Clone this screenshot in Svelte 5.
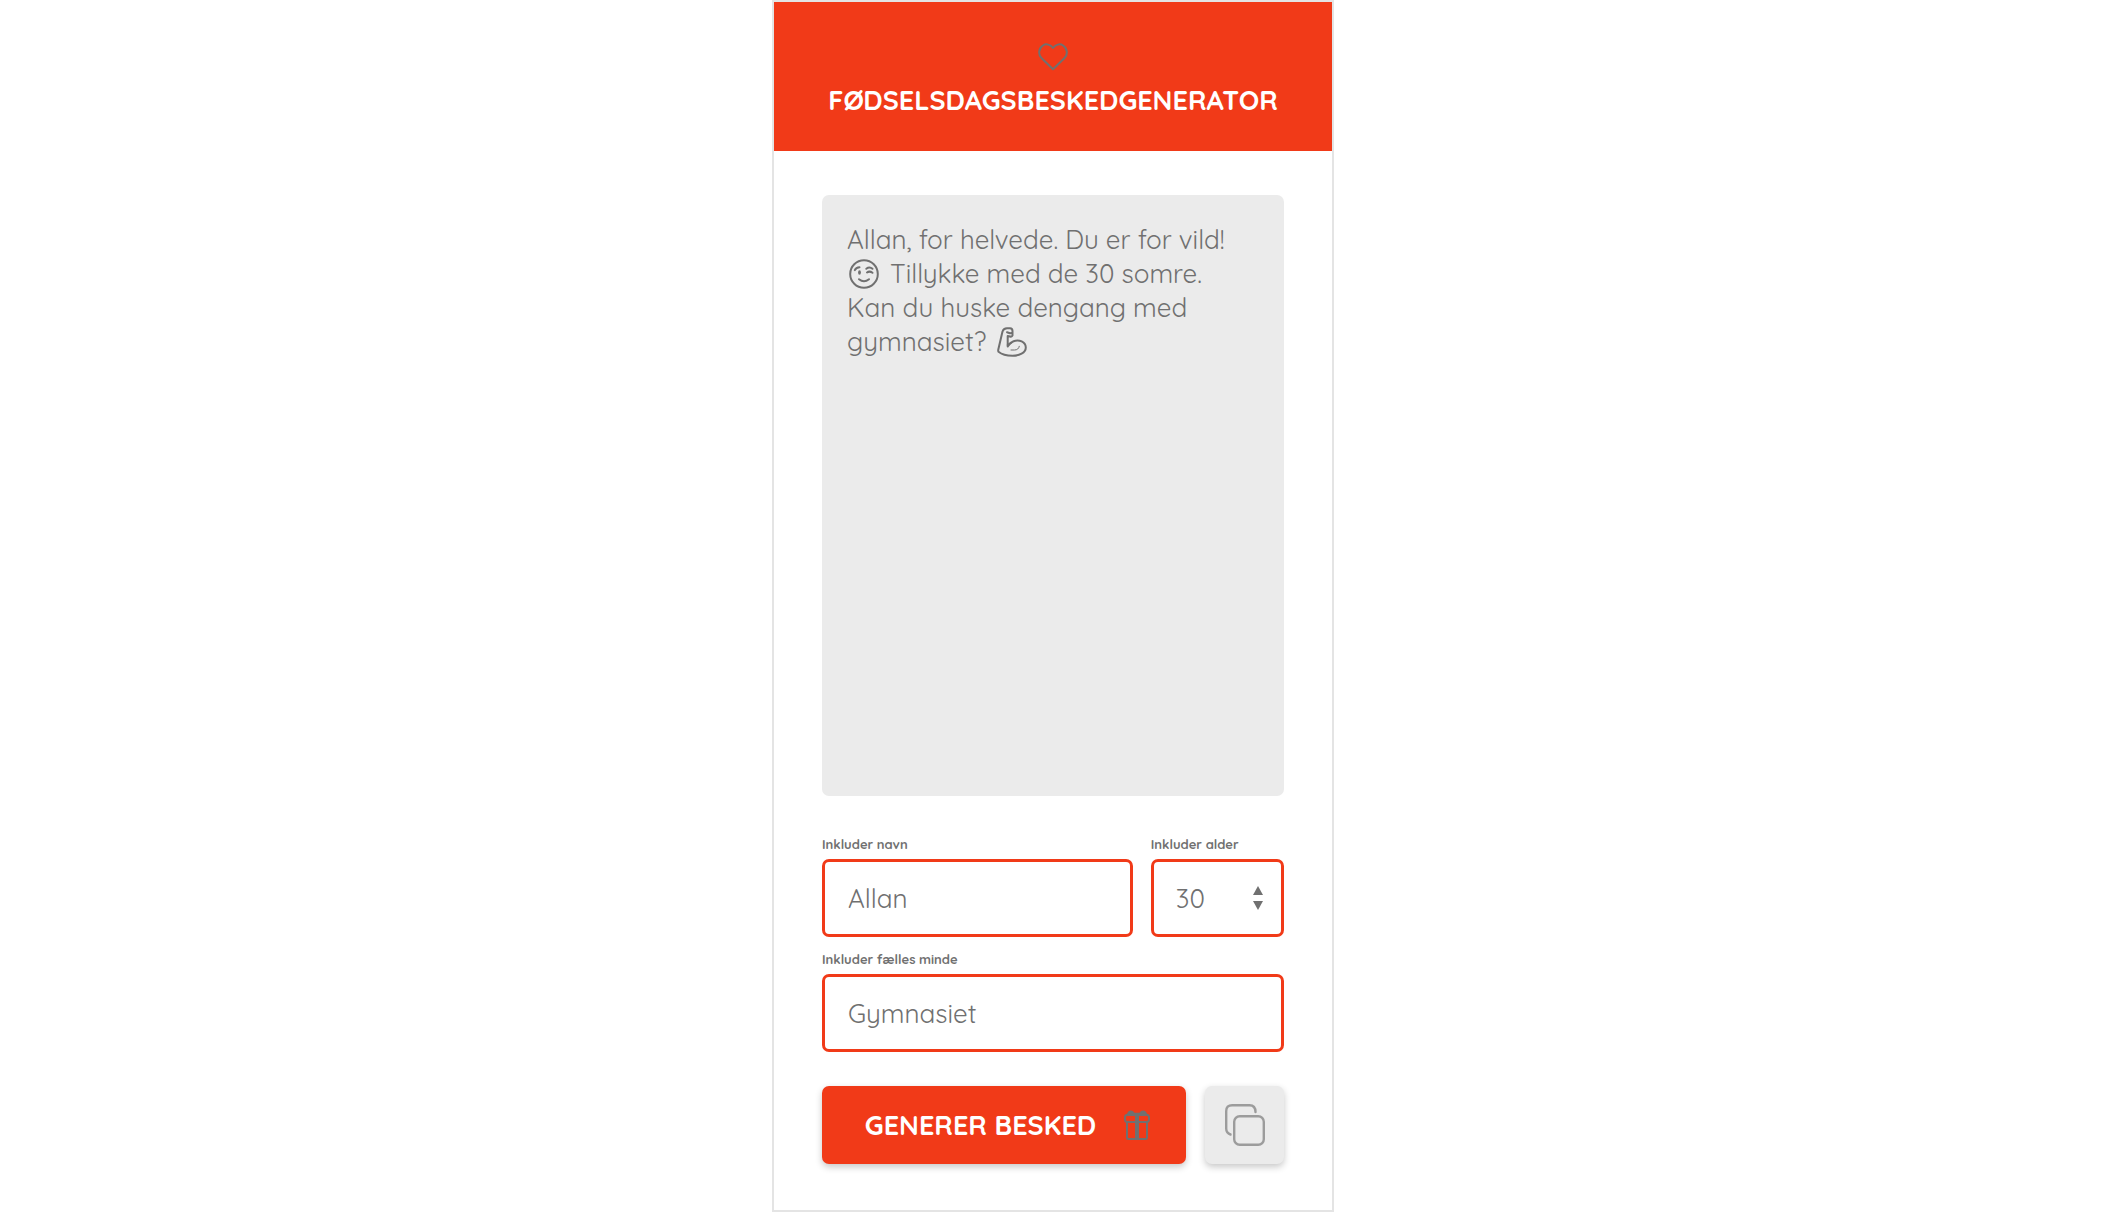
<script>
  let name = $state('Allan');
  let age = $state(30);
  let memory = $state('Gymnasiet');
</script>

<main class="card">
  <header class="banner">
    <svg class="heart" viewBox="0 0 30 28" aria-hidden="true">
      <path d="M15 5C12.4 1.6 8.2.2 4.9 2.5C.6 5.400 0 11 3.200 14.700L15 26.300L26.800 14.700C30 11 29.400 5.400 25.100 2.500C21.800.2 17.600 1.600 15 5Z" />
    </svg>
    <h1>FØDSELSDAGSBESKEDGENERATOR</h1>
  </header>

  <form class="body" onsubmit={(e) => e.preventDefault()}>
    <output class="message" for="name age memory">
      <span class="line">Allan, for helvede. Du er for vild!</span>
      <span class="line">
        <svg class="emoji" viewBox="0 0 30 30" role="img" aria-label="Blinkende smiley">
          <circle cx="15" cy="15" r="13.800" />
          <path d="M5.800 11.200Q7 8.300 10.500 8.200M17.300 9.800Q20.500 7.300 23.500 9.800M18 13.500Q20.500 11.600 23.500 13.800M10 20.200Q15 24.200 20 20.200" />
          <ellipse class="solid" cx="10.500" cy="13.500" rx="1.400" ry="2.200" />
        </svg>
        Tillykke med de 30 somre.
      </span>
      <span class="line">Kan du huske dengang med</span>
      <span class="line">
        gymnasiet?
        <svg class="emoji" viewBox="0 0 30 30" role="img" aria-label="Spændt biceps">
          <path d="M5.500 4.500Q6.500 1.500 10 1.300H13Q15.500 1.500 15.500 4V8.500Q15 10 13 9.500L10.700 9V19.500Q13 15.500 16.500 14.200C22 12 28.700 14.800 28.800 20.500C28.800 26 22 28.800 15.500 28.800C10 28.800 4.500 27.300 1.500 24.800Q1 24 1.300 22.500Z" />
          <path d="M10.700 18L14 15.800M10 5.200L13 6.300L15 6" />
          <path class="thin" d="M14 23H17.500Q21.500 23 22.300 19.300" />
        </svg>
      </span>
    </output>

    <div class="fields">
      <div class="field">
        <label for="name">Inkluder navn</label>
        <input id="name" type="text" bind:value={name} />
      </div>
      <div class="field">
        <label for="age">Inkluder alder</label>
        <div class="stepper">
          <input id="age" type="number" min="0" bind:value={age} />
          <div class="arrows">
            <button type="button" aria-label="Et år ældre" onclick={() => (age += 1)}>
              <svg viewBox="0 0 10 9" aria-hidden="true"><path d="M5 0L10 9H0Z" /></svg>
            </button>
            <button type="button" aria-label="Et år yngre" onclick={() => (age -= 1)}>
              <svg viewBox="0 0 10 9" aria-hidden="true"><path d="M0 0H10L5 9Z" /></svg>
            </button>
          </div>
        </div>
      </div>
      <div class="field wide">
        <label for="memory">Inkluder fælles minde</label>
        <input id="memory" type="text" bind:value={memory} />
      </div>
    </div>

    <div class="actions">
      <button class="generate" type="submit">
        <span>GENERER BESKED</span>
        <svg class="gift" viewBox="0 0 26 30" aria-hidden="true">
          <path class="solid" d="M3 5Q3 1 6.500.500Q9 .300 10.500 2.800H15.500Q17 .300 19.500.500Q23 1 23 5L22 6H4Z" />
          <rect x="1" y="4.800" width="24" height="7.200" rx="2.500" />
          <path d="M3 12V27.500Q3 29 4.500 29H21.500Q23 29 23 27.500V12" />
          <path class="ribbon" d="M13 4V29" />
        </svg>
      </button>
      <button class="copy" type="button" aria-label="Kopiér besked">
        <svg viewBox="0 0 40 42" aria-hidden="true">
          <path d="M5.500 30.500Q1.200 29 1.200 24.500V7.200Q1.200 1.200 7.200 1.200H24.500Q30.500 1.200 30.500 8" />
          <rect x="9.200" y="12.200" width="29.600" height="28.600" rx="5.500" />
        </svg>
      </button>
    </div>
  </form>
</main>

<style>
  :global(body) {
    background: #fff;
  }

  .card {
    --red: #f13a18;
    --grey: #707070;
    --panel: #ebebeb;
    box-sizing: border-box;
    display: flex;
    flex-direction: column;
    width: 100%;
    max-width: 562px;
    min-height: 100vh;
    margin: 0 auto;
    border: 2px solid #e4e4e4;
    color: var(--grey);
    font-family: Quicksand, Lato, sans-serif;
    font-size: 26px;
    font-weight: 400;
  }

  .banner {
    display: flex;
    flex-direction: column;
    align-items: center;
    gap: 13px;
    padding: 41px 16px 34px;
    background: var(--red);
  }

  svg {
    display: block;
    fill: none;
    stroke: currentColor;
    stroke-width: 2;
    stroke-linecap: round;
    stroke-linejoin: round;
  }

  .heart {
    width: 30px;
    height: 28px;
  }

  h1 {
    margin: 0;
    color: #fff;
    font-size: 27px;
    font-weight: 700;
    line-height: 33px;
  }

  .body {
    flex: 1;
    display: flex;
    flex-direction: column;
    padding: 44px 48px 46px;
  }

  .message {
    flex: 1;
    padding: 28px 25px;
    border-radius: 7px;
    background: var(--panel);
  }

  .line {
    display: flex;
    align-items: center;
    gap: 9px;
    line-height: 34px;
  }

  .emoji {
    width: 30px;
    height: 30px;
    margin: 0 2px;
  }

  .solid {
    fill: currentColor;
    stroke: none;
  }

  .thin {
    stroke-width: 1;
  }

  .fields {
    display: grid;
    grid-template-columns: 7fr 3fr;
    gap: 14px 18px;
    margin-top: 40px;
  }

  .field {
    display: flex;
    flex-direction: column;
    gap: 7px;
    min-width: 0;
  }

  .wide {
    grid-column: 1 / -1;
  }

  label {
    font-size: 13px;
    font-weight: 700;
    line-height: 16px;
  }

  input {
    box-sizing: border-box;
    width: 100%;
    height: 78px;
    padding: 0 23px;
    border: 3px solid var(--red);
    border-radius: 7px;
    background: #fff;
    color: inherit;
    font: inherit;
  }

  input[type='number'] {
    appearance: textfield;
    padding: 0 22px;
  }

  .stepper {
    display: grid;
    align-items: center;
  }

  .stepper > * {
    grid-area: 1 / 1;
  }

  .arrows {
    display: grid;
    gap: 6px;
    justify-self: end;
    margin-right: 21px;
  }

  button {
    padding: 0;
    border: 0;
    background: none;
    color: inherit;
    font: inherit;
    cursor: pointer;
  }

  .arrows svg {
    width: 10px;
    height: 9px;
    fill: currentColor;
    stroke: none;
  }

  .actions {
    display: flex;
    gap: 19px;
    margin-top: 34px;
  }

  .generate,
  .copy {
    display: flex;
    align-items: center;
    justify-content: center;
    height: 78px;
    border-radius: 7px;
    box-shadow: 0 3px 7px rgb(0 0 0 / 22%);
  }

  .generate {
    flex: 1;
    gap: 28px;
    padding-left: 7px;
    background: var(--red);
    font-size: 27px;
    font-weight: 700;
  }

  .generate span {
    color: #fff;
  }

  .gift {
    width: 26px;
    height: 30px;
  }

  .ribbon {
    stroke-width: 4;
    stroke-linecap: butt;
  }

  .copy {
    width: 79px;
    background: var(--panel);
    color: #9c9c9c;
  }

  .copy svg {
    width: 40px;
    height: 42px;
    stroke-width: 2.4;
  }
</style>
